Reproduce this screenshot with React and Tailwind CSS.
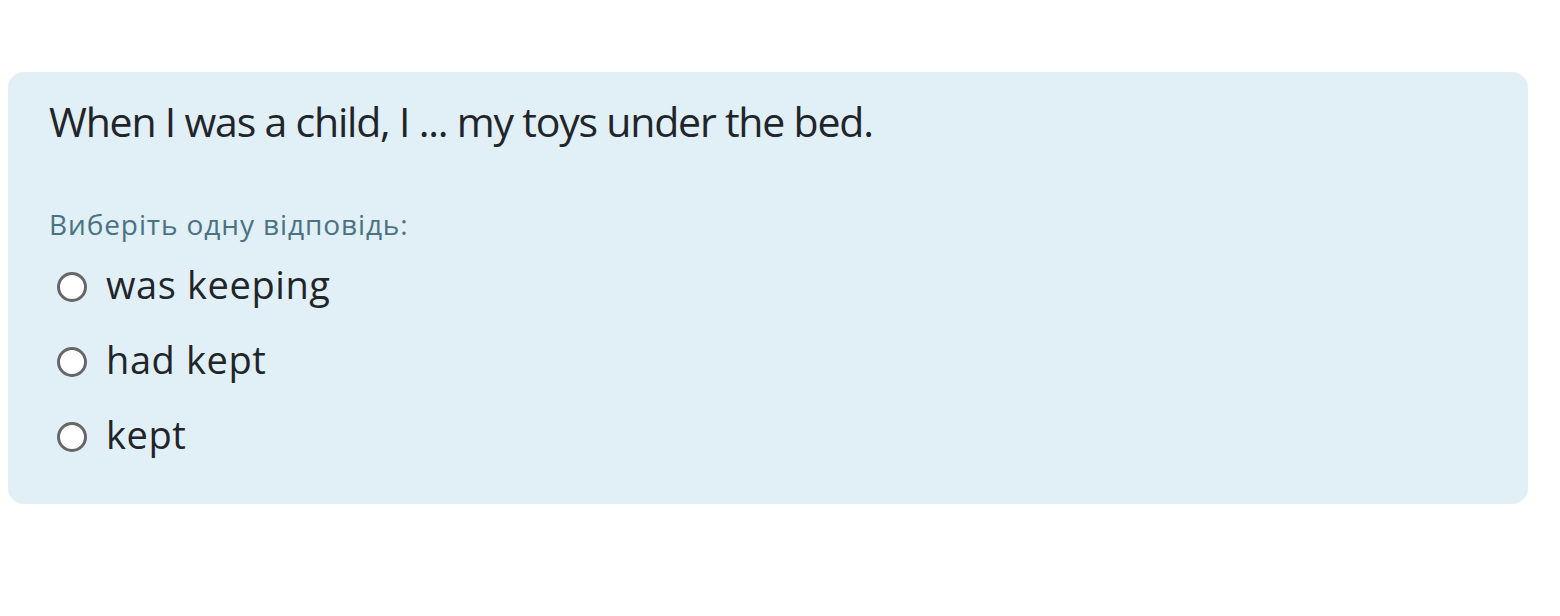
const options = ['was keeping', 'had kept', 'kept'];

export default function App() {
  return (
    <div className="w-[1560px] h-[616px] bg-white pt-[72px] px-2" style={{ fontFamily: '"Open Sans", sans-serif' }}>
      <div className="w-[1520px] h-[432px] rounded-2xl bg-[#e1eff6] pl-[41px] pt-[25px]">
        <div className="text-[41px] leading-[49px] tracking-[-1.2px] text-[#212529] whitespace-nowrap">
          When I was a child, I ... my toys under the bed.
        </div>
        <div className="mt-[62px] text-[28px] leading-[32px] tracking-[0.9px] text-[#4a7282]">
          Виберіть одну відповідь:
        </div>
        <div className="mt-[9px] flex flex-col">
          {options.map((o) => (
            <label key={o} className="flex items-center h-[75px]">
              <span className="ml-[8px] w-[30px] h-[30px] rounded-full border-[3px] border-[#666666] bg-white shrink-0"></span>
              <span className="ml-[19px] text-[38px] leading-[40px] tracking-[0.6px] text-[#212529] mt-[-5px]">{o}</span>
            </label>
          ))}
        </div>
      </div>
    </div>
  );
}
